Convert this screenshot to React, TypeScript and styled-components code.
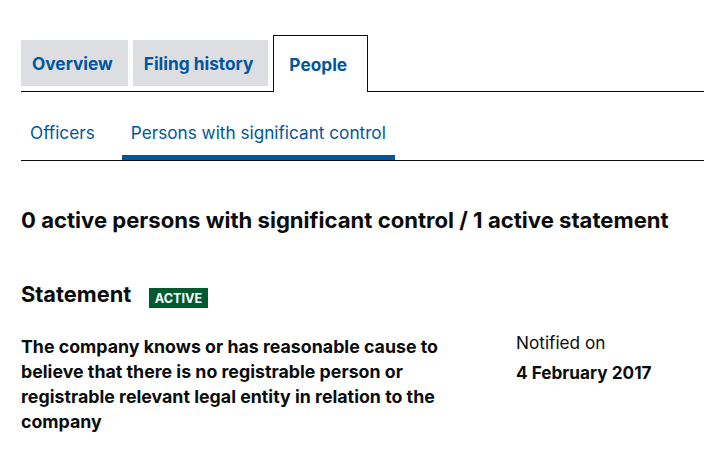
import React from "react";
import styled, { createGlobalStyle, css } from "styled-components";

const GlobalStyle = createGlobalStyle`
  html, body { margin: 0; padding: 0; background: #ffffff; }
  body {
    font-family: Inter, "Liberation Sans", Arial, sans-serif;
    color: #0b0c0c;
    -webkit-font-smoothing: antialiased;
  }
  * { box-sizing: border-box; }
`;

const BLUE = "#00569f";
const INK = "#0b0c0c";

const Page = styled.main`
  padding: 35px 0 0 21px;
  overflow: hidden;
`;

const TabList = styled.ul`
  display: flex;
  align-items: flex-end;
  gap: 5px;
  margin: 0;
  padding: 0;
  list-style: none;
  border-bottom: 1px solid ${INK};
`;

const Tab = styled.li<{ $selected?: boolean }>`
  display: flex;
  align-items: center;
  height: 46px;
  margin-bottom: 5px;
  padding: 1px 15px 0 11px;
  background: #dddee1;
  color: ${BLUE};
  font-size: 17.3px;
  font-weight: 700;
  white-space: nowrap;
  ${(p) =>
    p.$selected &&
    css`
      height: 57px;
      margin-bottom: -1px;
      padding: 0 20px 0 15px;
      background: #ffffff;
      border: 1px solid ${INK};
      border-bottom: 0;
    `}
`;

const SubNav = styled.ul`
  display: flex;
  gap: 18px;
  margin: 0;
  padding: 0;
  list-style: none;
  border-bottom: 1px solid ${INK};
`;

const SubLink = styled.li<{ $active?: boolean }>`
  padding: 28px 9px 10px;
  font-size: 17.2px;
  line-height: 25px;
  color: ${BLUE};
  border-bottom: 5px solid ${(p) => (p.$active ? BLUE : "transparent")};
  white-space: nowrap;
`;

const Summary = styled.h2`
  margin: 44px 0 0;
  font-size: 22.1px;
  line-height: 30px;
  font-weight: 700;
  white-space: nowrap;
`;

const StatementHead = styled.div`
  display: flex;
  align-items: flex-start;
  gap: 18px;
  margin-top: 45px;
`;

const StatementTitle = styled.h3`
  margin: 0;
  font-size: 21.8px;
  line-height: 28px;
  font-weight: 700;
`;

const Badge = styled.span`
  display: inline-block;
  margin-top: 8px;
  height: 20px;
  padding: 2px 5.5px 0;
  line-height: 18px;
  font-size: 12.7px;
  font-weight: 700;
  color: #ffffff;
  background: #005a30;
`;

const Details = styled.div`
  display: grid;
  grid-template-columns: 465px 1fr;
  column-gap: 30px;
  align-items: start;
  margin-top: 26px;
`;

const StatementText = styled.p`
  margin: 0;
  font-size: 17.8px;
  line-height: 25px;
  font-weight: 700;
`;

const Meta = styled.dl`
  margin: -4px 0 0;
  font-size: 17.2px;
  line-height: 25px;
`;

const MetaLabel = styled.dt`
  margin: 0;
  font-weight: 400;
`;

const MetaValue = styled.dd`
  margin: 5px 0 0;
  font-weight: 700;
`;

export default function App() {
  return (
    <Page>
      <GlobalStyle />
      <TabList>
        <Tab>Overview</Tab>
        <Tab>Filing history</Tab>
        <Tab $selected>People</Tab>
      </TabList>
      <SubNav>
        <SubLink>Officers</SubLink>
        <SubLink $active>Persons with significant control</SubLink>
      </SubNav>
      <Summary>0 active persons with significant control / 1 active statement</Summary>
      <StatementHead>
        <StatementTitle>Statement</StatementTitle>
        <Badge>ACTIVE</Badge>
      </StatementHead>
      <Details>
        <StatementText>
          The company knows or has reasonable cause to believe that there is no registrable person or
          registrable relevant legal entity in relation to the company
        </StatementText>
        <Meta>
          <MetaLabel>Notified on</MetaLabel>
          <MetaValue>4 February 2017</MetaValue>
        </Meta>
      </Details>
    </Page>
  );
}
